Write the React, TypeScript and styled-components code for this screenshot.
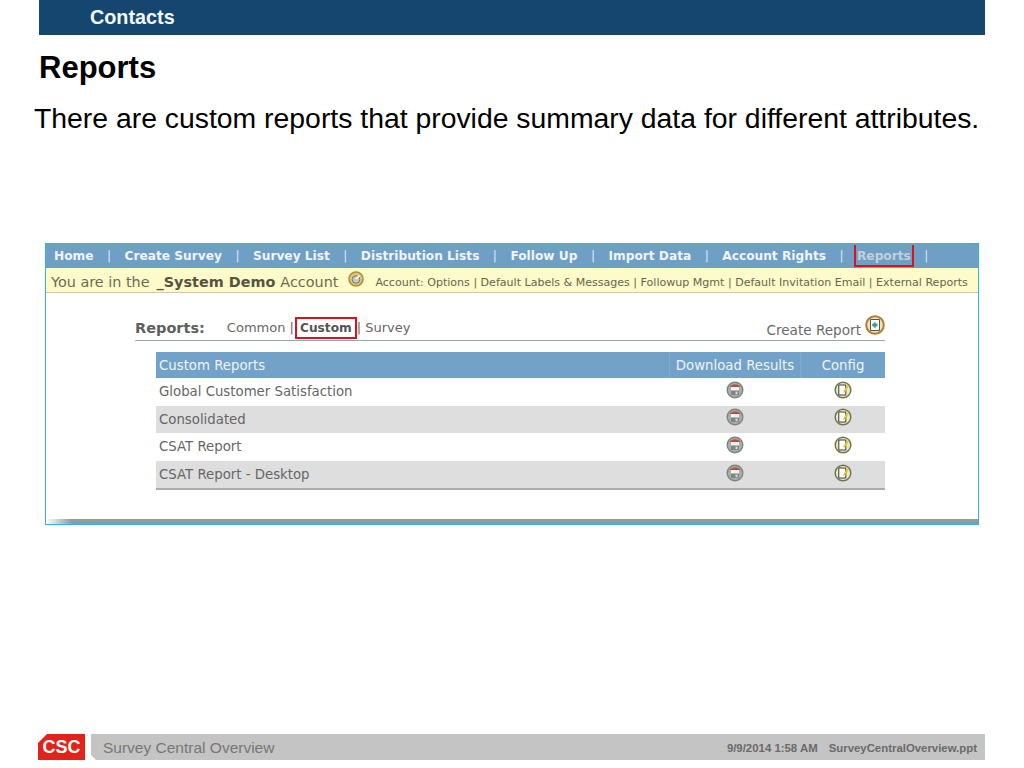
import { Fragment } from "react";
import { createGlobalStyle, styled } from "styled-components";

const GlobalStyle = createGlobalStyle`
  html, body {
    margin: 0;
    padding: 0;
    background: #fff;
  }
`;

const Page = styled.div`
  width: 1024px;
  height: 768px;
  display: flex;
  flex-direction: column;
  overflow: hidden;
  font-family: "Liberation Sans", Arial, sans-serif;
`;
const TopBar = styled.div`
  margin: 0 39px;
  height: 35px;
  padding: 5px 0 0 51px;
  box-sizing: border-box;
  background: #14466f;
  color: #f4f8fb;
  font-size: 19.8px;
  line-height: 24px;
  font-weight: 700;
`;
const Title = styled.h1`
  margin: 15px 0 0 39px;
  font-size: 31px;
  line-height: 36px;
  font-weight: 700;
  color: #000;
`;
const Lead = styled.p`
  margin: 15px 0 0 34px;
  font-size: 28.37px;
  line-height: 34px;
  white-space: nowrap;
  color: #000;
`;
const Shot = styled.div`
  margin: 108px 0 0 45px;
  width: 934px;
  height: 282px;
  box-sizing: border-box;
  display: flex;
  flex-direction: column;
  border: 1px solid #35b4d8;
  font-family: "DejaVu Sans", Verdana, sans-serif;
  background: #fff;
`;
const Nav = styled.nav`
  height: 24px;
  padding: 0 0 0 8px;
  box-sizing: border-box;
  display: flex;
  align-items: center;
  background: #6f9fc5;
  color: #f1f5f8;
  font-size: 12.2px;
  font-weight: 700;
`;
const NavItem = styled.span<{ $marked?: boolean }>`
  height: 22px;
  line-height: 22px;
  box-sizing: border-box;
  white-space: nowrap;
  ${(p) =>
    p.$marked &&
    `
    color: #c3d0dc;
    margin: 0 -3px;
    padding: 0 1px;
    border: 2px solid #d8121f;
    border-top: none;
  `}
`;
const NavSep = styled.span`
  width: 31px;
  text-align: center;
  font-weight: 400;
  color: #dbe7f0;
`;
const AccountBar = styled.div`
  height: 25px;
  padding: 3px 0 0 5px;
  box-sizing: border-box;
  display: flex;
  align-items: center;
  background: #fdfbc9;
  border-bottom: 1px solid #c9c9a8;
  color: #6b6b52;
  font-size: 14.4px;
  white-space: nowrap;
`;
const AccountName = styled.b`
  margin: 0 5px 0 7px;
  color: #55553f;
`;
const AccountIcon = styled.svg`
  margin: -6px 11px 0 10px;
  flex: none;
`;
const AccountLinks = styled.span`
  padding-top: 2px;
  font-size: 11.05px;
  color: #66664f;
`;
const Content = styled.div`
  flex: 1;
  padding: 22px 93px 0 89px;
  display: flex;
  flex-direction: column;
`;
const ReportsRow = styled.div`
  height: 26px;
  display: flex;
  align-items: center;
  border-bottom: 1px solid #9aa7b0;
  box-sizing: border-box;
  color: #666;
  font-size: 13px;
  white-space: nowrap;
`;
const ReportsLabel = styled.b`
  font-size: 14.5px;
  margin-right: 22px;
  color: #5f5f5f;
`;
const Tab = styled.span<{ $active?: boolean }>`
  ${(p) =>
    p.$active &&
    `
    display: inline-block;
    margin: 0 0 0 1px;
    padding: 0 3px;
    height: 22px;
    line-height: 18px;
    box-sizing: border-box;
    border: 2px solid #d8121f;
    font-size: 12.2px;
    font-weight: 700;
    color: #555;
  `}
`;
const CreateReport = styled.span`
  margin-left: auto;
  display: flex;
  align-items: center;
  gap: 4px;
  font-size: 13.6px;
  color: #6a6a6a;
`;
const CreateLabel = styled.span`
  padding-top: 5px;
`;
const CreateGlyph = styled.svg`
  margin-top: -6px;
`;
const Table = styled.div`
  margin: 11px 0 0 21px;
  border-bottom: 2px solid #aaa;
`;
const Row = styled.div<{ $shaded?: boolean }>`
  height: 27.6px;
  display: grid;
  grid-template-columns: 1fr 131px 85px;
  align-items: center;
  font-size: 13.3px;
  color: #666;
  background: ${(p) => (p.$shaded ? "#dedede" : "#fff")};
`;
const HeadRow = styled(Row)`
  height: 26px;
  background: #72a2c7;
  color: #eef4f8;
`;
const NameCell = styled.div`
  padding-left: 3px;
`;
const CenterCell = styled.div`
  display: flex;
  justify-content: center;
  padding-bottom: 4px;
`;
const HeadCell = styled(CenterCell)`
  padding-bottom: 0;
  height: 100%;
  align-items: center;
  border-left: 1px solid #80abcb;
`;
const ShotEdge = styled.div`
  margin-top: auto;
  height: 5px;
  background:
    linear-gradient(to right, #fff 0, rgba(255, 255, 255, 0) 26px),
    linear-gradient(to bottom, #9a9a8e 0 2px, #6fa3cb 2px);
`;
const Footer = styled.footer`
  margin: auto 39px 8px 38px;
  height: 26px;
  display: flex;
  gap: 6px;
`;
const Logo = styled.div`
  width: 47px;
  height: 26px;
  background: #e2231a;
  clip-path: polygon(9px 0, 100% 0, 100% 100%, 0 100%, 0 9px);
  color: #fff;
  font-size: 18px;
  line-height: 27px;
  font-weight: 700;
  text-align: center;
`;
const FooterBar = styled.div`
  flex: 1;
  display: flex;
  align-items: center;
  justify-content: space-between;
  padding: 2px 8px 0 12px;
  box-sizing: border-box;
  background: #c4c4c4;
  clip-path: polygon(0 0, 100% 0, 100% 100%, 5px 100%, 0 21px);
  color: #777;
  font-size: 15.5px;
`;
const FooterMeta = styled.div`
  display: flex;
  gap: 11px;
  font-size: 11.4px;
  font-weight: 700;
  color: #6a6a6a;
`;

const DiskIcon = () => (
  <svg width="18" height="18" viewBox="0 0 18 18">
    <circle cx="9" cy="9" r="7.8" fill="#a9b0ac" stroke="#7b847f" strokeWidth="1.4" />
    <path d="M4 5q5-3.6 10 0v1H4z" fill="#b5503f" />
    <rect x="5" y="6" width="8" height="3.6" fill="#f2f2f2" />
    <rect x="5" y="9.6" width="8" height="4.4" fill="#7d8684" />
    <rect x="9.5" y="10.6" width="2" height="2.6" fill="#dcdcdc" />
  </svg>
);

const NoteIcon = () => (
  <svg width="18" height="18" viewBox="0 0 18 18">
    <circle cx="9" cy="9" r="7.8" fill="#ecebc8" stroke="#74744c" strokeWidth="1.5" />
    <path d="M4.8 4h7v10h-7z" fill="#fff" stroke="#3a3a3a" strokeWidth="1" />
    <path d="M9.5 10l3.6-5.6 1.7 1.1-3.6 5.6-2 .6z" fill="#e5c62a" />
  </svg>
);

const navItems = [
  "Home",
  "Create Survey",
  "Survey List",
  "Distribution Lists",
  "Follow Up",
  "Import Data",
  "Account Rights",
];

const reports = [
  "Global Customer Satisfaction",
  "Consolidated",
  "CSAT Report",
  "CSAT Report - Desktop",
];

export default function App() {
  return (
    <Page>
      <GlobalStyle />
      <TopBar>Contacts</TopBar>
      <Title>Reports</Title>
      <Lead>There are custom reports that provide summary data for different attributes.</Lead>
      <Shot>
        <Nav>
          {navItems.map((item) => (
            <Fragment key={item}>
              <NavItem>{item}</NavItem>
              <NavSep>|</NavSep>
            </Fragment>
          ))}
          <NavItem $marked>Reports</NavItem>
          <NavSep>|</NavSep>
        </Nav>
        <AccountBar>
          You are in the<AccountName>_System Demo</AccountName>Account
          <AccountIcon width="16" height="16" viewBox="0 0 16 16">
            <circle cx="8" cy="8" r="7" fill="#ddc77c" stroke="#a8903e" strokeWidth="1.6" />
            <circle cx="8" cy="8.5" r="3.8" fill="#c9c9c0" stroke="#77776a" strokeWidth="1" />
            <path d="M8 8l3.4-3.4" stroke="#fff" strokeWidth="1.6" />
          </AccountIcon>
          <AccountLinks>
            Account: Options | Default Labels &amp; Messages | Followup Mgmt | Default Invitation Email | External Reports
          </AccountLinks>
        </AccountBar>
        <Content>
          <ReportsRow>
            <ReportsLabel>Reports:</ReportsLabel>
            <span>Common |</span>
            <Tab $active>Custom</Tab>
            <span>| Survey</span>
            <CreateReport>
              <CreateLabel>Create Report</CreateLabel>
              <CreateGlyph width="20" height="20" viewBox="0 0 20 20">
                <circle cx="10" cy="10" r="8.8" fill="#efe3c0" stroke="#b27d2c" strokeWidth="2" />
                <path d="M5.5 4.5h9v11h-9z" fill="#fff" stroke="#555" strokeWidth="1" />
                <path d="M6.5 10l4-3.6v2.1h2v3h-2v2.1z" fill="#3f9c8c" />
              </CreateGlyph>
            </CreateReport>
          </ReportsRow>
          <Table>
            <HeadRow>
              <NameCell>Custom Reports</NameCell>
              <HeadCell>Download Results</HeadCell>
              <HeadCell>Config</HeadCell>
            </HeadRow>
            {reports.map((name, i) => (
              <Row key={name} $shaded={i % 2 === 1}>
                <NameCell>{name}</NameCell>
                <CenterCell>
                  <DiskIcon />
                </CenterCell>
                <CenterCell>
                  <NoteIcon />
                </CenterCell>
              </Row>
            ))}
          </Table>
        </Content>
        <ShotEdge />
      </Shot>
      <Footer>
        <Logo>CSC</Logo>
        <FooterBar>
          Survey Central Overview
          <FooterMeta>
            <span>9/9/2014 1:58 AM</span>
            <span>SurveyCentralOverview.ppt</span>
          </FooterMeta>
        </FooterBar>
      </Footer>
    </Page>
  );
}
